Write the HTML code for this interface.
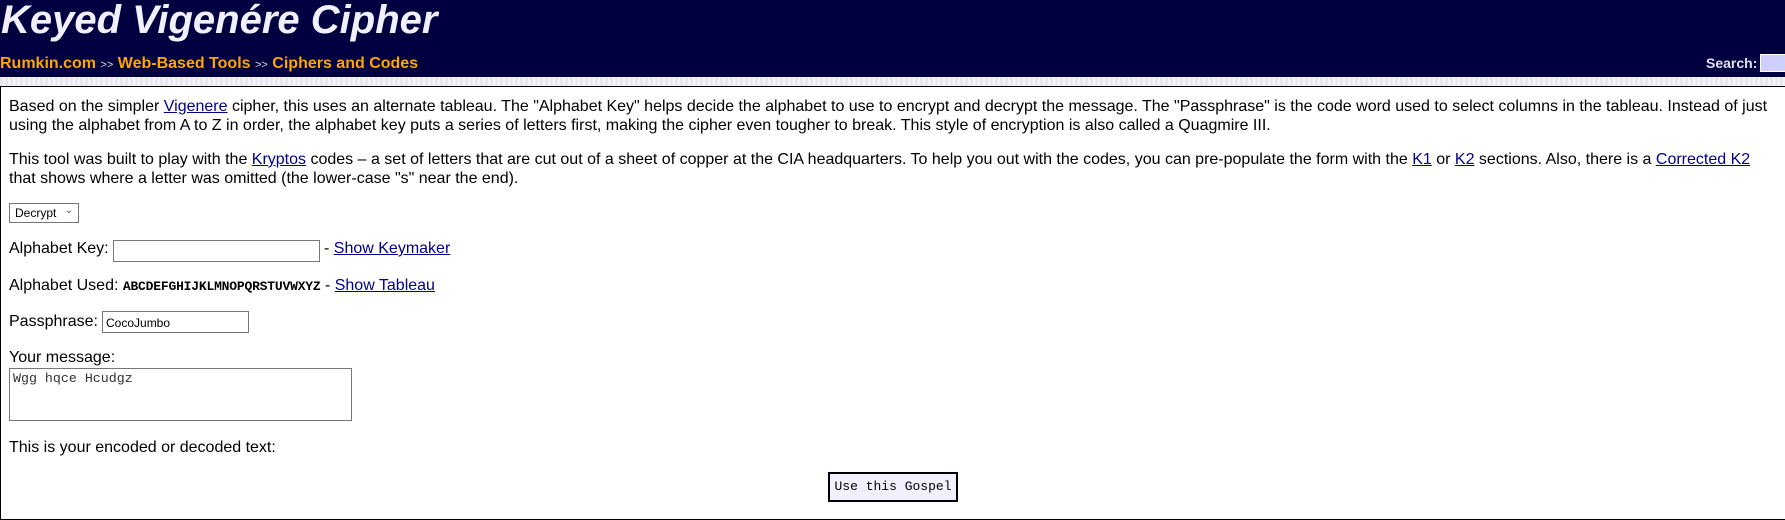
<!DOCTYPE html>
<html><head><meta charset="utf-8"><style>
html,body{margin:0;padding:0;width:1785px;height:520px;overflow:hidden;background:#fff;font-family:"Liberation Sans",Arial,sans-serif;font-size:16px;color:#000}
#hdr{position:absolute;left:0;top:0;width:1785px;height:77px;background:#000040}
#title{position:absolute;left:1px;top:-2px;font-size:40px;font-weight:bold;font-style:italic;color:#f0f0ff;white-space:nowrap}
#crumb{position:absolute;left:0;top:55px;font-size:16px;font-weight:bold;color:#ffa500;white-space:nowrap}
#crumb span{font-size:11px;color:#ddd;font-weight:normal}
#search{position:absolute;left:1706px;top:55px;font-size:14px;font-weight:bold;color:#e0e0f0}
#sbox{position:absolute;left:1760px;top:54px;width:30px;height:16px;background:#d0d0ff;border:1px solid #fff}
#stripe{position:absolute;left:0;top:77px;width:1785px;height:9px;background:repeating-linear-gradient(90deg,#e8e8ee 0 3px,#f4f4f8 3px 5px)}
#box{position:absolute;left:0;top:86px;width:1800px;height:432px;border:1px solid #000;border-right:none}
.t{position:absolute;left:9px;white-space:nowrap;line-height:19px}
a{color:#00008b;text-decoration:underline}
.inp{position:absolute;border:1px solid #777;background:#fff;font-size:12px;box-sizing:border-box}
.mono{font-family:"Liberation Mono",monospace}
</style></head><body>
<div id="hdr"><div id="title">Keyed Vigenére Cipher</div>
<div id="crumb">Rumkin.com <span>&gt;&gt;</span> Web-Based Tools <span>&gt;&gt;</span> Ciphers and Codes</div>
<div id="search">Search:</div><div id="sbox"></div></div>
<div id="stripe"></div>
<div id="box"></div>
<div class="t" style="top:97px">Based on the simpler <a>Vigenere</a> cipher, this uses an alternate tableau. The "Alphabet Key" helps decide the alphabet to use to encrypt and decrypt the message. The "Passphrase" is the code word used to select columns in the tableau. Instead of just<br>using the alphabet from A to Z in order, the alphabet key puts a series of letters first, making the cipher even tougher to break. This style of encryption is also called a Quagmire III.</div>
<div class="t" style="top:150px">This tool was built to play with the <a>Kryptos</a> codes – a set of letters that are cut out of a sheet of copper at the CIA headquarters. To help you out with the codes, you can pre-populate the form with the <a>K1</a> or <a>K2</a> sections. Also, there is a <a>Corrected K2</a><br>that shows where a letter was omitted (the lower-case "s" near the end).</div>
<div class="inp" style="left:9px;top:203px;width:70px;height:20px;font-size:12px;padding:2px 0 0 5px">Decrypt <span style="position:absolute;right:5px;top:1px;font-size:10px;color:#555">&#8964;</span></div>
<div class="t" style="top:239px">Alphabet Key:</div>
<div class="inp" style="left:113px;top:240px;width:207px;height:22px"></div>
<div class="t" style="left:324px;top:239px">- <a>Show Keymaker</a></div>
<div class="t" style="top:276px">Alphabet Used: <span class="mono" style="font-size:13px;font-weight:bold;letter-spacing:-0.2px">ABCDEFGHIJKLMNOPQRSTUVWXYZ</span> - <a>Show Tableau</a></div>
<div class="t" style="top:312px">Passphrase:</div>
<div class="inp" style="left:102px;top:311px;width:147px;height:22px;padding:4px 0 0 3px">CocoJumbo</div>
<div class="t" style="top:348px">Your message:</div>
<div class="inp mono" style="left:9px;top:368px;width:343px;height:53px;padding:2px 0 0 3px;font-size:13.3px;color:#333">Wgg hqce Hcudgz</div>
<div class="t" style="top:438px">This is your encoded or decoded text:</div>
<div class="mono" style="position:absolute;left:828px;top:472px;width:130px;height:30px;box-sizing:border-box;border:2px solid #000;background:#f0f0ff;font-size:13px;text-align:center;line-height:26px">Use this Gospel</div>
</body></html>
